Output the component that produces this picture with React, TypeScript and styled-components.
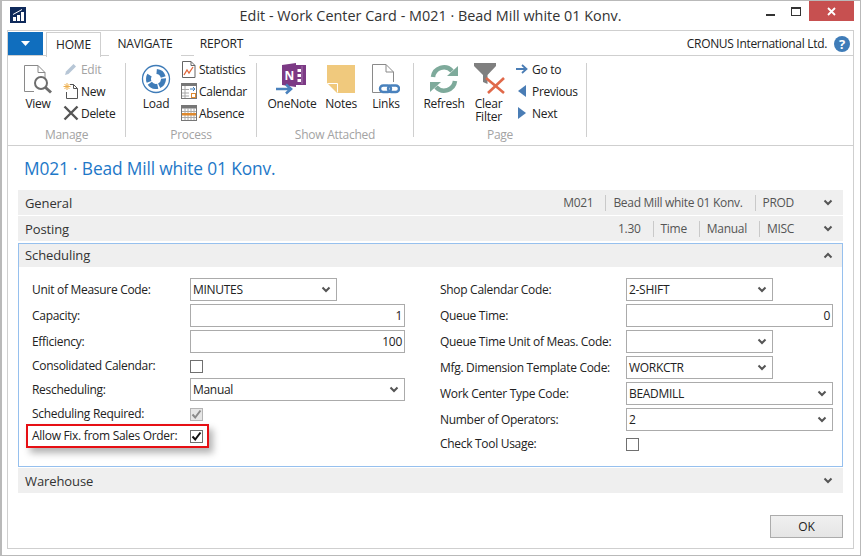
import React from "react";
import styled, { createGlobalStyle } from "styled-components";

const GlobalStyle = createGlobalStyle`
  html, body {
    margin: 0;
    padding: 0;
    background: #fff;
  }
  body {
    font-family: "Open Sans", "Noto Sans", "Liberation Sans", sans-serif;
    font-size: 12px;
    color: #222;
  }
`;

// Window chrome
const Window = styled.div`
  box-sizing: border-box;
  width: 861px;
  height: 556px;
  display: flex;
  flex-direction: column;
  padding: 0 6px 0 6px;
  border: 1px solid #b9b9b9;
  box-shadow: inset 1px 0 0 #b9b9b9;
  background: #fff;
`;

const TitleBar = styled.div`
  height: 29px;
  flex: none;
  display: grid;
  grid-template-columns: 1fr auto 1fr;
  align-items: flex-start;
`;

const AppLogo = styled.div`
  margin: 6px 0 0 3px;
  width: 16px;
  height: 16px;
`;

const WindowTitle = styled.div`
  font-size: 14.4px;
  line-height: 29px;
  color: #333;
`;

const WindowControls = styled.div`
  display: flex;
  justify-content: flex-end;
  align-items: flex-start;
`;

const ControlButton = styled.div<{ $w: number; $close?: boolean }>`
  width: ${(p) => p.$w}px;
  height: 20px;
  display: flex;
  align-items: center;
  justify-content: center;
  background: ${(p) => (p.$close ? "#c75050" : "transparent")};
`;

const Panel = styled.div`
  flex: 1;
  display: flex;
  flex-direction: column;
  border: 1px solid #cfcfcf;
  margin-bottom: 6px;
  min-height: 0;
`;

// Ribbon
const TabRow = styled.div`
  height: 24px;
  flex: none;
  display: flex;
  align-items: stretch;
  border-bottom: 1px solid #cfcfcf;
`;

const FileButton = styled.div`
  width: 35px;
  margin-top: 1px;
  background: #106ebe;
  display: flex;
  align-items: center;
  justify-content: center;
`;

const Tab = styled.div<{ $active?: boolean; $w: number; $ml: number }>`
  box-sizing: border-box;
  width: ${(p) => p.$w}px;
  height: ${(p) => (p.$active ? "25px" : "24px")};
  margin: 1px 0 0 ${(p) => p.$ml}px;
  text-align: center;
  line-height: 24px;
  font-size: 12px;
  letter-spacing: -0.2px;
  color: #222;
  background: #fff;
  ${(p) => (p.$active ? "border: 1px solid #cfcfcf; border-bottom: none;" : "")}
`;

const Company = styled.div`
  margin-left: auto;
  display: flex;
  align-items: center;
  gap: 7px;
  padding: 1px 3px 0 0;
  font-size: 12px;
  letter-spacing: -0.32px;
  color: #222;
`;

const HelpIcon = styled.div`
  width: 16px;
  height: 16px;
  border-radius: 50%;
  background: #3f7cb8;
  color: #fff;
  font-weight: 700;
  font-size: 13px;
  line-height: 16px;
  text-align: center;
`;

const Ribbon = styled.div`
  height: 89px;
  flex: none;
  display: flex;
  border-bottom: 1px solid #cfcfcf;
`;

const RibbonGroup = styled.div<{ $w: number; $pad: number }>`
  box-sizing: border-box;
  width: ${(p) => p.$w}px;
  padding: 2px 0 0 ${(p) => p.$pad}px;
  display: flex;
  flex-direction: column;
`;

const GroupItems = styled.div`
  display: flex;
  flex: 1;
  align-items: flex-start;
`;

const GroupLabel = styled.div<{ $shift: number }>`
  height: 19px;
  line-height: 17px;
  text-align: center;
  color: #a3a3a3;
  font-size: 12px;
  letter-spacing: -0.25px;
  margin-left: -${(p) => p.$shift}px;
`;

const RibbonSep = styled.div`
  width: 1px;
  flex: none;
  margin: 7px 0 8px;
  background: #cfcfcf;
`;

const LargeButton = styled.div<{ $w: number }>`
  width: ${(p) => p.$w}px;
  margin-top: 5px;
  display: flex;
  flex-direction: column;
  align-items: center;
  text-align: center;
  line-height: 13px;
  letter-spacing: -0.25px;
`;

const LargeIcon = styled.div`
  height: 32px;
  margin-bottom: 2px;
  display: flex;
  align-items: center;
  justify-content: center;
`;

const SmallColumn = styled.div<{ $ml?: number }>`
  margin-left: ${(p) => p.$ml ?? 5}px;
  display: flex;
  flex-direction: column;
`;

const SmallButton = styled.div<{ $disabled?: boolean }>`
  height: 22px;
  display: flex;
  align-items: center;
  gap: 2px;
  letter-spacing: -0.3px;
  color: ${(p) => (p.$disabled ? "#a3a3a3" : "#222")};
`;

const SmallIcon = styled.div`
  width: 16px;
  height: 16px;
  display: flex;
  align-items: center;
  justify-content: center;
`;

// Page body
const PageBody = styled.div`
  flex: 1;
  display: flex;
  flex-direction: column;
  padding: 0 10px;
`;

const PageTitle = styled.div`
  height: 44px;
  line-height: 45px;
  font-size: 17.35px;
  letter-spacing: -0.15px;
  color: #1e78c8;
  padding-left: 6px;
`;

const SectionBar = styled.div<{ $open?: boolean }>`
  box-sizing: border-box;
  height: ${(p) => (p.$open ? "23px" : "25px")};
  margin-bottom: ${(p) => (p.$open ? "0" : "1px")};
  display: flex;
  align-items: center;
  background: #efefef;
  padding: 0 ${(p) => (p.$open ? "9px" : "10px")} ${(p) => (p.$open ? "1px" : "0")} ${(p) => (p.$open ? "6px" : "7px")};
`;

const SectionName = styled.div`
  font-size: 13px;
  letter-spacing: -0.1px;
  color: #333;
`;

const Summary = styled.div`
  margin-left: auto;
  margin-right: 29px;
  display: flex;
  align-items: center;
  color: #555;
  letter-spacing: -0.3px;
`;

const SummaryItem = styled.div<{ $first?: boolean; $last?: boolean }>`
  height: 16px;
  line-height: 16px;
  padding: 0 ${(p) => (p.$last ? "0" : "12px")} 0 ${(p) => (p.$first ? "0" : "7px")};
  border-right: ${(p) => (p.$last ? "none" : "1px solid #c9c9c9")};
`;

const SectionChevron = styled.div<{ $auto?: boolean }>`
  width: 10px;
  display: flex;
  ${(p) => (p.$auto ? "margin-left: auto;" : "")}
`;

const OpenSection = styled.div`
  margin: 1px 0;
  border: 1px solid #96c0ee;
`;

const FormGrid = styled.div`
  box-sizing: border-box;
  height: 199px;
  display: grid;
  grid-template-columns: 373px 393px;
  column-gap: 35px;
  padding: 11px 0 0 13px;
`;

const FormColumn = styled.div`
  display: flex;
  flex-direction: column;
`;

const FormRow = styled.div<{ $labelW: number; $check?: boolean }>`
  position: relative;
  flex: none;
  height: ${(p) => (p.$check ? "19px" : "23px")};
  margin-bottom: 3px;
  display: grid;
  grid-template-columns: ${(p) => p.$labelW}px 1fr;
  align-items: center;
`;

const FieldLabel = styled.div`
  letter-spacing: -0.3px;
  color: #222;
  white-space: nowrap;
`;

const Field = styled.div<{ $w?: number; $right?: boolean }>`
  box-sizing: border-box;
  height: 23px;
  width: ${(p) => (p.$w ? `${p.$w}px` : "100%")};
  border: 1px solid #ababab;
  display: flex;
  align-items: center;
  justify-content: ${(p) => (p.$right ? "flex-end" : "space-between")};
  padding: 0 ${(p) => (p.$right ? "2px" : "5px")} 0 2px;
  background: #fff;
  letter-spacing: -0.3px;
  color: #222;
`;

const CheckBox = styled.div<{ $disabled?: boolean }>`
  box-sizing: border-box;
  width: 13px;
  height: 13px;
  margin-top: 2px;
  border: 1px solid ${(p) => (p.$disabled ? "#b4b4b4" : "#707070")};
  background: ${(p) => (p.$disabled ? "#e6e6e6" : "#fff")};
  display: flex;
  align-items: center;
  justify-content: center;
`;

const Highlight = styled.div`
  position: absolute;
  left: -6px;
  top: -2px;
  width: 183px;
  height: 24px;
  box-sizing: border-box;
  border: 2px solid #e60f14;
  box-shadow: 4px 5px 7px rgba(0, 0, 0, 0.3);
  pointer-events: none;
`;

const Footer = styled.div`
  display: flex;
  justify-content: flex-end;
  padding-top: 21px;
`;

const OkButton = styled.div`
  box-sizing: border-box;
  width: 73px;
  height: 23px;
  border: 1px solid #acacac;
  background: linear-gradient(#f0f0f0, #e5e5e5);
  text-align: center;
  line-height: 21px;
  color: #222;
`;

// Icons
const Chevron = ({ up }: { up?: boolean }) => (
  <svg width="10" height="7" viewBox="0 0 10 7">
    <polyline
      points={up ? "1.5,5.5 5,2 8.5,5.5" : "1.5,1.5 5,5 8.5,1.5"}
      fill="none"
      stroke="#555"
      strokeWidth="2"
    />
  </svg>
);

const Check = ({ color }: { color: string }) => (
  <svg width="11" height="11" viewBox="0 0 11 11">
    <polyline points="1.5,5.5 4.2,8.5 9.5,1.5" fill="none" stroke={color} strokeWidth="2" />
  </svg>
);

const ViewIcon = () => (
  <svg width="30" height="30" viewBox="0 0 30 30">
    <path d="M1.5 1.5H15L22 8.5V14M1.5 1.5V27.5H11" fill="none" stroke="#8a8a8a" />
    <path d="M15 1.5V8.5H22" fill="none" stroke="#8a8a8a" />
    <circle cx="18" cy="19" r="6" fill="#fff" stroke="#6d6d6d" strokeWidth="2" />
    <line x1="22.5" y1="23.5" x2="28" y2="28.5" stroke="#6d6d6d" strokeWidth="3" />
  </svg>
);

const LoadIcon = () => (
  <svg width="30" height="30" viewBox="0 0 30 30">
    <circle cx="15" cy="15" r="13.5" fill="none" stroke="#3f7cb8" strokeWidth="1.3" />
    <circle
      cx="15"
      cy="15"
      r="7.5"
      fill="none"
      stroke="#3f7cb8"
      strokeWidth="5"
      strokeDasharray="9 1.5 9 1.5 9 1.5 7 10"
      transform="rotate(-85 15 15)"
    />
  </svg>
);

const PencilIcon = () => (
  <svg width="14" height="14" viewBox="0 0 14 14">
    <path d="M1 13L2 9.5L9.5 2L12 4.5L4.5 12Z" fill="#b7c6d6" />
  </svg>
);

const NewIcon = () => (
  <svg width="16" height="16" viewBox="0 0 16 16">
    <path d="M7 1.5H10.5L14.5 5.5V15.5H3.5V9" fill="none" stroke="#555" />
    <path d="M10.5 1.5V5.5H14.5" fill="none" stroke="#555" />
    <path d="M4 0V7M0.5 3.5H7.5M1.5 1L6.5 6M6.5 1L1.5 6" stroke="#eeb04e" />
  </svg>
);

const DeleteIcon = () => (
  <svg width="16" height="16" viewBox="0 0 16 16">
    <path d="M1.5 1.5L14.5 14.5M14.5 1.5L1.5 14.5" stroke="#555" strokeWidth="2.4" />
  </svg>
);

const StatisticsIcon = () => (
  <svg width="16" height="17" viewBox="0 0 16 17">
    <path d="M1.5 .5H10L14 4.5V16.5H1.5Z" fill="#fff" stroke="#666" />
    <path d="M10 .5V4.5H14" fill="none" stroke="#666" />
    <path d="M3 14L6 9L8 12L12 6" fill="none" stroke="#e2673a" strokeWidth="1.3" />
  </svg>
);

const CalendarIcon = () => (
  <svg width="16" height="16" viewBox="0 0 16 16">
    <rect x=".5" y=".5" width="15" height="15" fill="#fff" stroke="#777" />
    <rect x=".5" y=".5" width="15" height="2.5" fill="#777" />
    <path d="M1 6.5H8M1 10H8M1 13H8M4 3V15" stroke="#aaa" />
    <path d="M9 6H14M12 4L14 6L12 8" fill="none" stroke="#3f7cb8" />
    <rect x="10.5" y="10.5" width="4" height="4" fill="#fff" stroke="#e08a2e" />
  </svg>
);

const AbsenceIcon = () => (
  <svg width="16" height="16" viewBox="0 0 16 16">
    <rect x=".5" y=".5" width="15" height="15" fill="#fff" stroke="#777" />
    <rect x=".5" y=".5" width="15" height="3" fill="#777" />
    <path d="M1 6.5H15M1 12.5H15M4 3V15M7 3V15M10 3V15M13 3V15" stroke="#aaa" />
    <rect x="1" y="8" width="14" height="2.5" fill="#e08a2e" />
  </svg>
);

const OneNoteIcon = () => (
  <svg width="32" height="32" viewBox="0 0 32 32">
    <path d="M6 2L20 0V24L6 22Z" fill="#7c3a85" />
    <path d="M20 2H30V22H20Z" fill="#7c3a85" />
    <path d="M21.5 6H25V9H21.5ZM21.5 11H25V14H21.5ZM21.5 16H25V19H21.5Z" fill="#fff" />
    <path d="M26 3V21" stroke="#a579ad" />
    <text x="8.5" y="16.5" fontFamily="Open Sans" fontWeight="700" fontSize="12" fill="#fff">N</text>
    <path d="M0 26H14M10 21.5L15 26L10 30.5" fill="none" stroke="#4a82bd" strokeWidth="2.6" />
  </svg>
);

const NotesIcon = () => (
  <svg width="28" height="28" viewBox="0 0 28 28">
    <path d="M0 0H28V28H10L0 18Z" fill="#f0c97d" />
    <path d="M0.5 18.5H10.5V27.5" fill="none" stroke="#fff" />
  </svg>
);

const LinksIcon = () => (
  <svg width="28" height="30" viewBox="0 0 28 30">
    <path d="M.5 .5H14L21.5 8V18M.5 .5V28.5H9" fill="none" stroke="#8a8a8a" />
    <path d="M14 .5V8H21.5" fill="none" stroke="#8a8a8a" />
    <rect x="8" y="21.5" width="11" height="6.5" rx="3.2" fill="none" stroke="#4a82bd" strokeWidth="2.4" />
    <rect x="16" y="21.5" width="11" height="6.5" rx="3.2" fill="none" stroke="#4a82bd" strokeWidth="2.4" />
  </svg>
);

const RefreshIcon = () => (
  <svg width="28" height="28" viewBox="0 0 28 28">
    <path d="M3 12A11 11 0 0 1 22 6" fill="none" stroke="#7eaa9b" strokeWidth="4.5" />
    <path d="M17 11H28V1Z" fill="#7eaa9b" />
    <path d="M25 16A11 11 0 0 1 6 22" fill="none" stroke="#7eaa9b" strokeWidth="4.5" />
    <path d="M11 17H0V27Z" fill="#7eaa9b" />
  </svg>
);

const ClearFilterIcon = () => (
  <svg width="32" height="32" viewBox="0 0 32 32">
    <path d="M1 0H23V3L14.5 12V21L10 19V12L1 3Z" fill="#7f7f7f" />
    <path d="M13 15L31 30M31 15L15 30" stroke="#e0694a" strokeWidth="2.6" />
  </svg>
);

const GoToIcon = () => (
  <svg width="12" height="10" viewBox="0 0 12 10">
    <path d="M0 5H10M6 1L10.5 5L6 9" fill="none" stroke="#4a7db5" strokeWidth="1.8" />
  </svg>
);

const Triangle = ({ left }: { left?: boolean }) => (
  <svg width="8" height="12" viewBox="0 0 8 12">
    <path d={left ? "M8 0V12L0 6Z" : "M0 0V12L8 6Z"} fill="#4a7db5" />
  </svg>
);

const Logo = () => (
  <svg width="16" height="16" viewBox="0 0 16 16">
    <rect width="16" height="16" fill="#0f2a5b" />
    <path d="M3 10H6V14H3ZM7 8H10V14H7ZM11 5H14V14H11Z" fill="#fff" />
    <path d="M3 7.5L12 2.5" stroke="#fff" />
  </svg>
);

const SmallAction = ({ icon, label, disabled }: { icon: React.ReactNode; label: string; disabled?: boolean }) => (
  <SmallButton $disabled={disabled}>
    <SmallIcon>{icon}</SmallIcon>
    {label}
  </SmallButton>
);

const LargeAction = ({ icon, label, w }: { icon: React.ReactNode; label: React.ReactNode; w: number }) => (
  <LargeButton $w={w}>
    <LargeIcon>{icon}</LargeIcon>
    {label}
  </LargeButton>
);

const SelectField = ({ value, w }: { value?: string; w?: number }) => (
  <Field $w={w}>
    <span>{value}</span>
    <Chevron />
  </Field>
);

const CollapsedSection = ({ name, items }: { name: string; items?: string[] }) => (
  <SectionBar>
    <SectionName>{name}</SectionName>
    {items && (
      <Summary>
        {items.map((item, index) => (
          <SummaryItem key={item} $first={index === 0} $last={index === items.length - 1}>
            {item}
          </SummaryItem>
        ))}
      </Summary>
    )}
    <SectionChevron $auto={!items}>
      <Chevron />
    </SectionChevron>
  </SectionBar>
);

export default function App() {
  return (
    <>
      <GlobalStyle />
      <Window>
        <TitleBar>
          <AppLogo>
            <Logo />
          </AppLogo>
          <WindowTitle>Edit - Work Center Card - M021 · Bead Mill white 01 Konv.</WindowTitle>
          <WindowControls>
            <ControlButton $w={26}>
              <svg width="9" height="12" viewBox="0 0 9 12">
                <rect y="9" width="9" height="2" fill="#333" />
              </svg>
            </ControlButton>
            <ControlButton $w={26}>
              <svg width="10" height="9" viewBox="0 0 10 9">
                <rect x=".5" y=".5" width="9" height="8" fill="none" stroke="#333" />
                <rect x="0" y="0" width="10" height="2" fill="#333" />
              </svg>
            </ControlButton>
            <ControlButton $w={45} $close>
              <svg width="9" height="9" viewBox="0 0 9 9">
                <path d="M1 1L8 8M8 1L1 8" stroke="#fff" strokeWidth="1.8" />
              </svg>
            </ControlButton>
          </WindowControls>
        </TitleBar>
        <Panel>
          <TabRow>
            <FileButton>
              <svg width="9" height="5" viewBox="0 0 9 5">
                <path d="M0 0H9L4.5 5Z" fill="#fff" />
              </svg>
            </FileButton>
            <Tab $w={55} $ml={3} $active>HOME</Tab>
            <Tab $w={72} $ml={8}>NAVIGATE</Tab>
            <Tab $w={55} $ml={13}>REPORT</Tab>
            <Company>
              CRONUS International Ltd.
              <HelpIcon>?</HelpIcon>
            </Company>
          </TabRow>
          <Ribbon>
            <RibbonGroup $w={117} $pad={10}>
              <GroupItems>
                <LargeAction icon={<ViewIcon />} label="View" w={40} />
                <SmallColumn>
                  <SmallAction icon={<PencilIcon />} label="Edit" disabled />
                  <SmallAction icon={<NewIcon />} label="New" />
                  <SmallAction icon={<DeleteIcon />} label="Delete" />
                </SmallColumn>
              </GroupItems>
              <GroupLabel $shift={10}>Manage</GroupLabel>
            </RibbonGroup>
            <RibbonSep />
            <RibbonGroup $w={130} $pad={10}>
              <GroupItems>
                <LargeAction icon={<LoadIcon />} label="Load" w={40} />
                <SmallColumn>
                  <SmallAction icon={<StatisticsIcon />} label="Statistics" />
                  <SmallAction icon={<CalendarIcon />} label="Calendar" />
                  <SmallAction icon={<AbsenceIcon />} label="Absence" />
                </SmallColumn>
              </GroupItems>
              <GroupLabel $shift={10}>Process</GroupLabel>
            </RibbonGroup>
            <RibbonSep />
            <RibbonGroup $w={156} $pad={10}>
              <GroupItems>
                <LargeAction icon={<OneNoteIcon />} label="OneNote" w={50} />
                <LargeAction icon={<NotesIcon />} label="Notes" w={48} />
                <LargeAction icon={<LinksIcon />} label="Links" w={42} />
              </GroupItems>
              <GroupLabel $shift={10}>Show Attached</GroupLabel>
            </RibbonGroup>
            <RibbonSep />
            <RibbonGroup $w={172} $pad={8}>
              <GroupItems>
                <LargeAction icon={<RefreshIcon />} label="Refresh" w={44} />
                <LargeAction icon={<ClearFilterIcon />} label={<>Clear<br />Filter</>} w={45} />
                <SmallColumn $ml={3}>
                  <SmallAction icon={<GoToIcon />} label="Go to" />
                  <SmallAction icon={<Triangle left />} label="Previous" />
                  <SmallAction icon={<Triangle />} label="Next" />
                </SmallColumn>
              </GroupItems>
              <GroupLabel $shift={8}>Page</GroupLabel>
            </RibbonGroup>
            <RibbonSep />
          </Ribbon>
          <PageBody>
            <PageTitle>M021 · Bead Mill white 01 Konv.</PageTitle>
            <CollapsedSection name="General" items={["M021", "Bead Mill white 01 Konv.", "PROD"]} />
            <CollapsedSection name="Posting" items={["1.30", "Time", "Manual", "MISC"]} />
            <OpenSection>
              <SectionBar $open>
                <SectionName>Scheduling</SectionName>
                <SectionChevron $auto>
                  <Chevron up />
                </SectionChevron>
              </SectionBar>
              <FormGrid>
                <FormColumn>
                  <FormRow $labelW={158}>
                    <FieldLabel>Unit of Measure Code:</FieldLabel>
                    <SelectField value="MINUTES" w={147} />
                  </FormRow>
                  <FormRow $labelW={158}>
                    <FieldLabel>Capacity:</FieldLabel>
                    <Field $right>1</Field>
                  </FormRow>
                  <FormRow $labelW={158}>
                    <FieldLabel>Efficiency:</FieldLabel>
                    <Field $right>100</Field>
                  </FormRow>
                  <FormRow $labelW={158} $check>
                    <FieldLabel>Consolidated Calendar:</FieldLabel>
                    <CheckBox />
                  </FormRow>
                  <FormRow $labelW={158}>
                    <FieldLabel>Rescheduling:</FieldLabel>
                    <SelectField value="Manual" />
                  </FormRow>
                  <FormRow $labelW={158} $check>
                    <FieldLabel>Scheduling Required:</FieldLabel>
                    <CheckBox $disabled>
                      <Check color="#8a8a8a" />
                    </CheckBox>
                  </FormRow>
                  <FormRow $labelW={158} $check>
                    <FieldLabel>Allow Fix. from Sales Order:</FieldLabel>
                    <CheckBox>
                      <Check color="#111" />
                    </CheckBox>
                    <Highlight />
                  </FormRow>
                </FormColumn>
                <FormColumn>
                  <FormRow $labelW={186}>
                    <FieldLabel>Shop Calendar Code:</FieldLabel>
                    <SelectField value="2-SHIFT" w={147} />
                  </FormRow>
                  <FormRow $labelW={186}>
                    <FieldLabel>Queue Time:</FieldLabel>
                    <Field $right>0</Field>
                  </FormRow>
                  <FormRow $labelW={186}>
                    <FieldLabel>Queue Time Unit of Meas. Code:</FieldLabel>
                    <SelectField w={147} />
                  </FormRow>
                  <FormRow $labelW={186}>
                    <FieldLabel>Mfg. Dimension Template Code:</FieldLabel>
                    <SelectField value="WORKCTR" w={147} />
                  </FormRow>
                  <FormRow $labelW={186}>
                    <FieldLabel>Work Center Type Code:</FieldLabel>
                    <SelectField value="BEADMILL" />
                  </FormRow>
                  <FormRow $labelW={186}>
                    <FieldLabel>Number of Operators:</FieldLabel>
                    <SelectField value="2" />
                  </FormRow>
                  <FormRow $labelW={186} $check>
                    <FieldLabel>Check Tool Usage:</FieldLabel>
                    <CheckBox />
                  </FormRow>
                </FormColumn>
              </FormGrid>
            </OpenSection>
            <CollapsedSection name="Warehouse" />
            <Footer>
              <OkButton>OK</OkButton>
            </Footer>
          </PageBody>
        </Panel>
      </Window>
    </>
  );
}
